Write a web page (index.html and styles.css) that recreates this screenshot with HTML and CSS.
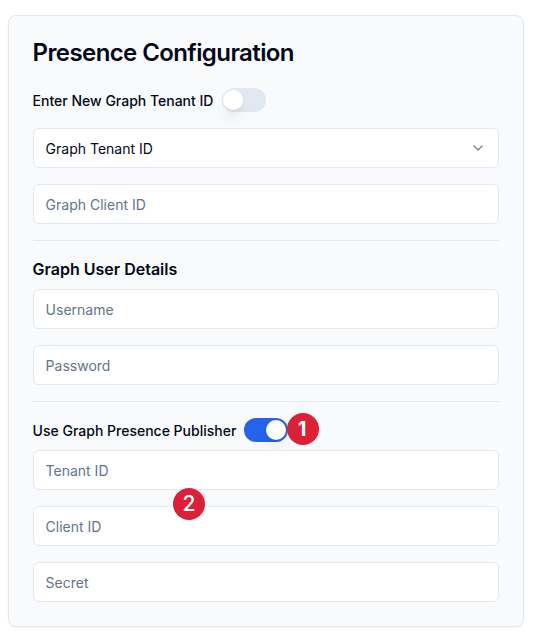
FILE: index.html
```html
<!DOCTYPE html>
<html lang="en">
<head>
  <meta charset="UTF-8">
  <meta name="viewport" content="width=device-width, initial-scale=1.0">
  <title>Presence Configuration</title>
  <link rel="stylesheet" href="styles.css">
</head>
<body>

<div class="card">
  <h1>Presence Configuration</h1>

  <div class="switch-row">
    <span class="label">Enter New Graph Tenant ID</span>
    <button type="button" class="switch" role="switch" aria-checked="false"><span class="thumb"></span></button>
  </div>
  <button type="button" class="field select">
    <span>Graph Tenant ID</span>
    <svg class="chevron" width="16" height="16" viewBox="0 0 24 24" fill="none" stroke="currentColor" stroke-width="2" stroke-linecap="round" stroke-linejoin="round"><path d="m6 9 6 6 6-6"/></svg>
  </button>
  <input class="field" type="text" placeholder="Graph Client ID">

  <hr>

  <h2>Graph User Details</h2>
  <input class="field" type="text" placeholder="Username">
  <input class="field" type="password" placeholder="Password">

  <hr>

  <div class="switch-row publisher">
    <span class="label">Use Graph Presence Publisher</span>
    <button type="button" class="switch on" role="switch" aria-checked="true"><span class="thumb"></span></button>
    <span class="marker marker-one">1</span>
  </div>
  <div class="publisher-fields">
    <input class="field" type="text" placeholder="Tenant ID">
    <input class="field" type="text" placeholder="Client ID">
    <input class="field" type="password" placeholder="Secret">
    <span class="marker marker-two">2</span>
  </div>
</div>

</body>
</html>
```
FILE: styles.css
```css
* {
  box-sizing: border-box;
}
body {
  font-family: Inter, sans-serif;
  font-size: 14px;
  line-height: 20px;
  color: #020817;
  background-color: #fff;
  margin: 0;
  padding: 15px 9.4px 14px 7.6px;
}
.card {
  background-color: #f9fafc;
  border: 1px solid #e2e8f0;
  border-radius: 8px;
  box-shadow: 0 1px 2px rgba(0, 0, 0, 0.05);
  padding: 24px;
}
h1 {
  font-size: 24px;
  font-weight: 600;
  line-height: 24px;
  letter-spacing: -0.025em;
  margin: 0;
  padding: 1px 0 23px;
}
h2 {
  font-size: 16px;
  font-weight: 600;
  line-height: 24px;
  margin: 0 0 8px;
}
.switch-row {
  display: flex;
  align-items: center;
  gap: 8px;
  position: relative;
  height: 24px;
  margin-bottom: 16px;
}
.publisher {
  margin-bottom: 8px;
}
.label {
  font-weight: 500;
  padding-top: 2px;
}
.switch {
  width: 44px;
  height: 24px;
  padding: 2px;
  margin-left: 0.6px;
  border: none;
  border-radius: 12px;
  background-color: #e2e8f0;
}
.switch.on {
  margin-left: 0;
  background-color: #2563eb;
}
.thumb {
  display: block;
  width: 20px;
  height: 20px;
  margin-left: -1px;
  border-radius: 50%;
  background-color: #fff;
  box-shadow: 0 10px 15px -3px rgba(0, 0, 0, 0.1), 0 4px 6px -4px rgba(0, 0, 0, 0.1);
}
.switch.on .thumb {
  margin-left: 20px;
}
.field {
  display: block;
  width: 100%;
  height: 40px;
  padding: 8px 12px;
  margin-bottom: 16px;
  border: 1px solid #e2e8f0;
  border-radius: 6px;
  background-color: #fff;
  color: #020817;
  font: inherit;
}
.field::placeholder {
  color: #64748b;
}
.select {
  display: flex;
  align-items: center;
  justify-content: space-between;
}
.select span {
  padding-top: 2px;
}
.chevron {
  opacity: 0.5;
}
hr {
  height: 1px;
  margin: 0 0 16px;
  border: none;
  background-color: #e2e8f0;
}
.publisher-fields {
  position: relative;
}
.publisher-fields .field:last-of-type {
  margin-bottom: 0;
}
.marker {
  position: absolute;
  width: 32px;
  height: 32px;
  border-radius: 50%;
  background-color: #dc2037;
  color: #fff;
  font-size: 20px;
  font-weight: 700;
  line-height: 32px;
  text-align: center;
}
.marker-one {
  left: 254.5px;
  top: -5px;
  padding-right: 2px;
}
.marker-two {
  left: 140.4px;
  top: 38px;
  font-size: 21px;
  font-weight: 500;
}
```
